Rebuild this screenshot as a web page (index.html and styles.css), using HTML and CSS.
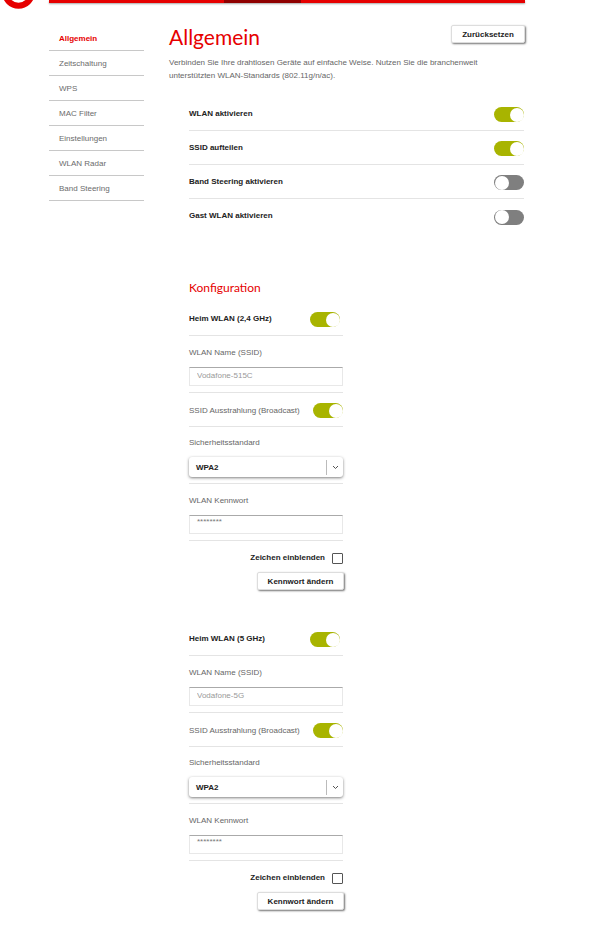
FILE: index.html

```html
<!DOCTYPE html>
<html lang="de">
<head>
    <meta charset="UTF-8">
    <title>WLAN Allgemein</title>
    <link rel="stylesheet" href="styles.css">
</head>
<body>
    <header class="top">
        <svg class="logo" width="49" height="9" viewBox="0 0 49 9">
            <circle cx="18.5" cy="-7.7" r="13.4" fill="none" stroke="#e60000" stroke-width="6"/>
        </svg>
        <div class="top-bar"><span class="top-bar-active"></span></div>
    </header>

    <div class="page">
        <nav class="side-nav">
            <a class="side-link active">Allgemein</a>
            <a class="side-link">Zeitschaltung</a>
            <a class="side-link">WPS</a>
            <a class="side-link">MAC Filter</a>
            <a class="side-link">Einstellungen</a>
            <a class="side-link">WLAN Radar</a>
            <a class="side-link">Band Steering</a>
        </nav>

        <main class="content">
            <div class="title-row">
                <h1>Allgemein</h1>
                <button class="btn">Zurücksetzen</button>
            </div>
            <p class="intro">Verbinden Sie Ihre drahtlosen Geräte auf einfache Weise. Nutzen Sie die branchenweit unterstützten WLAN-Standards (802.11g/n/ac).</p>

            <div class="switch-list">
                <div class="row"><span class="label-strong">WLAN aktivieren</span><span class="toggle on"></span></div>
                <div class="row"><span class="label-strong">SSID aufteilen</span><span class="toggle on"></span></div>
                <div class="row"><span class="label-strong">Band Steering aktivieren</span><span class="toggle"></span></div>
                <div class="row last"><span class="label-strong">Gast WLAN aktivieren</span><span class="toggle"></span></div>
            </div>

            <h2>Konfiguration</h2>

            <section class="band">
                <div class="row"><span class="label-strong">Heim WLAN (2,4 GHz)</span><span class="toggle on inset"></span></div>
                <div class="field">
                    <div class="field-label">WLAN Name (SSID)</div>
                    <input class="text-input" type="text" placeholder="Vodafone-515C">
                </div>
                <div class="row"><span class="label">SSID Ausstrahlung (Broadcast)</span><span class="toggle on"></span></div>
                <div class="field">
                    <div class="field-label field-label-short">Sicherheitsstandard</div>
                    <div class="select">
                        <span class="select-value">WPA2</span>
                        <span class="select-arrow">
                            <svg width="7" height="5" viewBox="0 0 7 5"><path d="M1 1l2.5 2.5L6 1" fill="none" stroke="#555" stroke-width="1"/></svg>
                        </span>
                    </div>
                </div>
                <div class="field">
                    <div class="field-label">WLAN Kennwort</div>
                    <div class="text-input password">********</div>
                </div>
                <label class="show-chars"><span class="label-strong">Zeichen einblenden</span><span class="checkbox"></span></label>
                <div class="actions"><button class="btn">Kennwort ändern</button></div>
            </section>

            <section class="band">
                <div class="row"><span class="label-strong">Heim WLAN (5 GHz)</span><span class="toggle on inset"></span></div>
                <div class="field">
                    <div class="field-label">WLAN Name (SSID)</div>
                    <input class="text-input" type="text" placeholder="Vodafone-5G">
                </div>
                <div class="row"><span class="label">SSID Ausstrahlung (Broadcast)</span><span class="toggle on"></span></div>
                <div class="field">
                    <div class="field-label field-label-short">Sicherheitsstandard</div>
                    <div class="select">
                        <span class="select-value">WPA2</span>
                        <span class="select-arrow">
                            <svg width="7" height="5" viewBox="0 0 7 5"><path d="M1 1l2.5 2.5L6 1" fill="none" stroke="#555" stroke-width="1"/></svg>
                        </span>
                    </div>
                </div>
                <div class="field">
                    <div class="field-label">WLAN Kennwort</div>
                    <div class="text-input password">********</div>
                </div>
                <label class="show-chars"><span class="label-strong">Zeichen einblenden</span><span class="checkbox"></span></label>
                <div class="actions"><button class="btn">Kennwort ändern</button></div>
            </section>
        </main>
    </div>
</body>
</html>
```

FILE: styles.css

```css
* {
    margin: 0;
    padding: 0;
    box-sizing: border-box;
}

body {
    background: #fff;
    color: #666;
    font-family: 'Liberation Sans', Arial, sans-serif;
    font-size: 8px;
    overflow-x: hidden;
}

/* Top bar */
.top {
    display: flex;
    align-items: flex-start;
    height: 26px;
}

.logo {
    flex: none;
    display: block;
}

.top-bar {
    width: 476px;
    height: 3px;
    background: #e60000;
    box-shadow: 0 1px 2px rgba(0, 0, 0, 0.35);
    padding-left: 175px;
}

.top-bar-active {
    display: block;
    width: 77px;
    height: 3px;
    background: #8f0000;
}

.page {
    display: flex;
    gap: 25px;
    padding-left: 49px;
}

/* Side navigation */
.side-nav {
    width: 95px;
    flex: none;
}

.side-link {
    display: flex;
    align-items: center;
    height: 25px;
    padding-left: 10px;
    border-bottom: 1px solid #c8c8c8;
    color: #6b6b6b;
}

.side-link.active {
    color: #e60000;
    font-weight: bold;
}

/* Main column */
.content {
    width: 356px;
    padding-bottom: 17px;
}

.title-row {
    display: flex;
    justify-content: space-between;
    align-items: flex-start;
    height: 29px;
}

h1 {
    font-family: Lato, sans-serif;
    font-weight: 400;
    font-size: 21px;
    line-height: 22px;
    color: #e60000;
}

.intro {
    line-height: 13px;
    width: 320px;
    height: 42px;
    padding-top: 1px;
}

.btn {
    background: #fff;
    border: 1px solid #ddd;
    border-radius: 2px;
    box-shadow: 1px 1px 2px rgba(0, 0, 0, 0.55);
    color: #222;
    font-family: 'Liberation Sans', Arial, sans-serif;
    font-size: 8px;
    font-weight: bold;
    width: 74px;
    height: 18px;
}

.title-row .btn {
    margin-top: -1px;
}

.switch-list {
    margin: 0 1px 0 20px;
}

.switch-list .label-strong {
    margin-bottom: 1px;
}

.row {
    display: flex;
    justify-content: space-between;
    align-items: center;
    height: 34px;
    border-bottom: 1px solid #e4e4e4;
}

.row.last {
    border-bottom: none;
}

.label {
    margin-top: 1px;
}

.label-strong {
    color: #222;
    font-weight: bold;
}

.toggle {
    display: flex;
    width: 30px;
    height: 15px;
    margin-top: 2px;
    padding: 0.5px;
    border-radius: 8px;
    background: #7f7f7f;
}

.toggle::after {
    content: "";
    width: 14px;
    height: 14px;
    border-radius: 50%;
    background: #fff;
}

.toggle.on {
    justify-content: flex-end;
    background: #a8b400;
}

.toggle.inset {
    margin-right: 3px;
}

h2 {
    font-family: Lato, sans-serif;
    font-weight: 400;
    font-size: 12px;
    line-height: 20px;
    color: #e60000;
    margin: 45px 0 4px 20px;
}

/* Band sections */
.band {
    width: 154px;
    margin-left: 20px;
    margin-bottom: 32px;
}

.field {
    border-bottom: 1px solid #e4e4e4;
    padding-bottom: 6px;
}

.field-label {
    display: flex;
    align-items: center;
    height: 31px;
    padding-top: 1px;
}

.field-label-short {
    height: 30px;
}

.text-input {
    display: block;
    width: 100%;
    height: 19px;
    padding: 0 7px 3px;
    border: 1px solid #e8e8e8;
    border-top-color: #aaa;
    font-family: 'Liberation Sans', Arial, sans-serif;
    font-size: 8px;
    outline: none;
}

.text-input::placeholder {
    color: #999;
}

.password {
    padding-top: 0;
    line-height: 11px;
    color: #777;
}

.select {
    display: flex;
    justify-content: space-between;
    align-items: center;
    height: 20px;
    padding-left: 7px;
    border-radius: 3px;
    background: #fff;
    box-shadow: 0 1px 3px rgba(0, 0, 0, 0.5);
    color: #222;
    font-weight: bold;
}

.select-arrow {
    display: flex;
    justify-content: center;
    align-items: center;
    width: 17px;
    height: 15px;
    border-left: 1px solid #bbb;
}

.show-chars {
    display: flex;
    justify-content: flex-end;
    align-items: center;
    gap: 7px;
    height: 31px;
    padding-top: 3px;
}

.show-chars .label-strong {
    margin-bottom: 1px;
}

.checkbox {
    width: 11px;
    height: 11px;
    border: 1px solid #555;
    border-radius: 1px;
}

.actions {
    display: flex;
    justify-content: flex-end;
    margin-right: -1px;
}

.actions .btn {
    width: 87px;
}
```
